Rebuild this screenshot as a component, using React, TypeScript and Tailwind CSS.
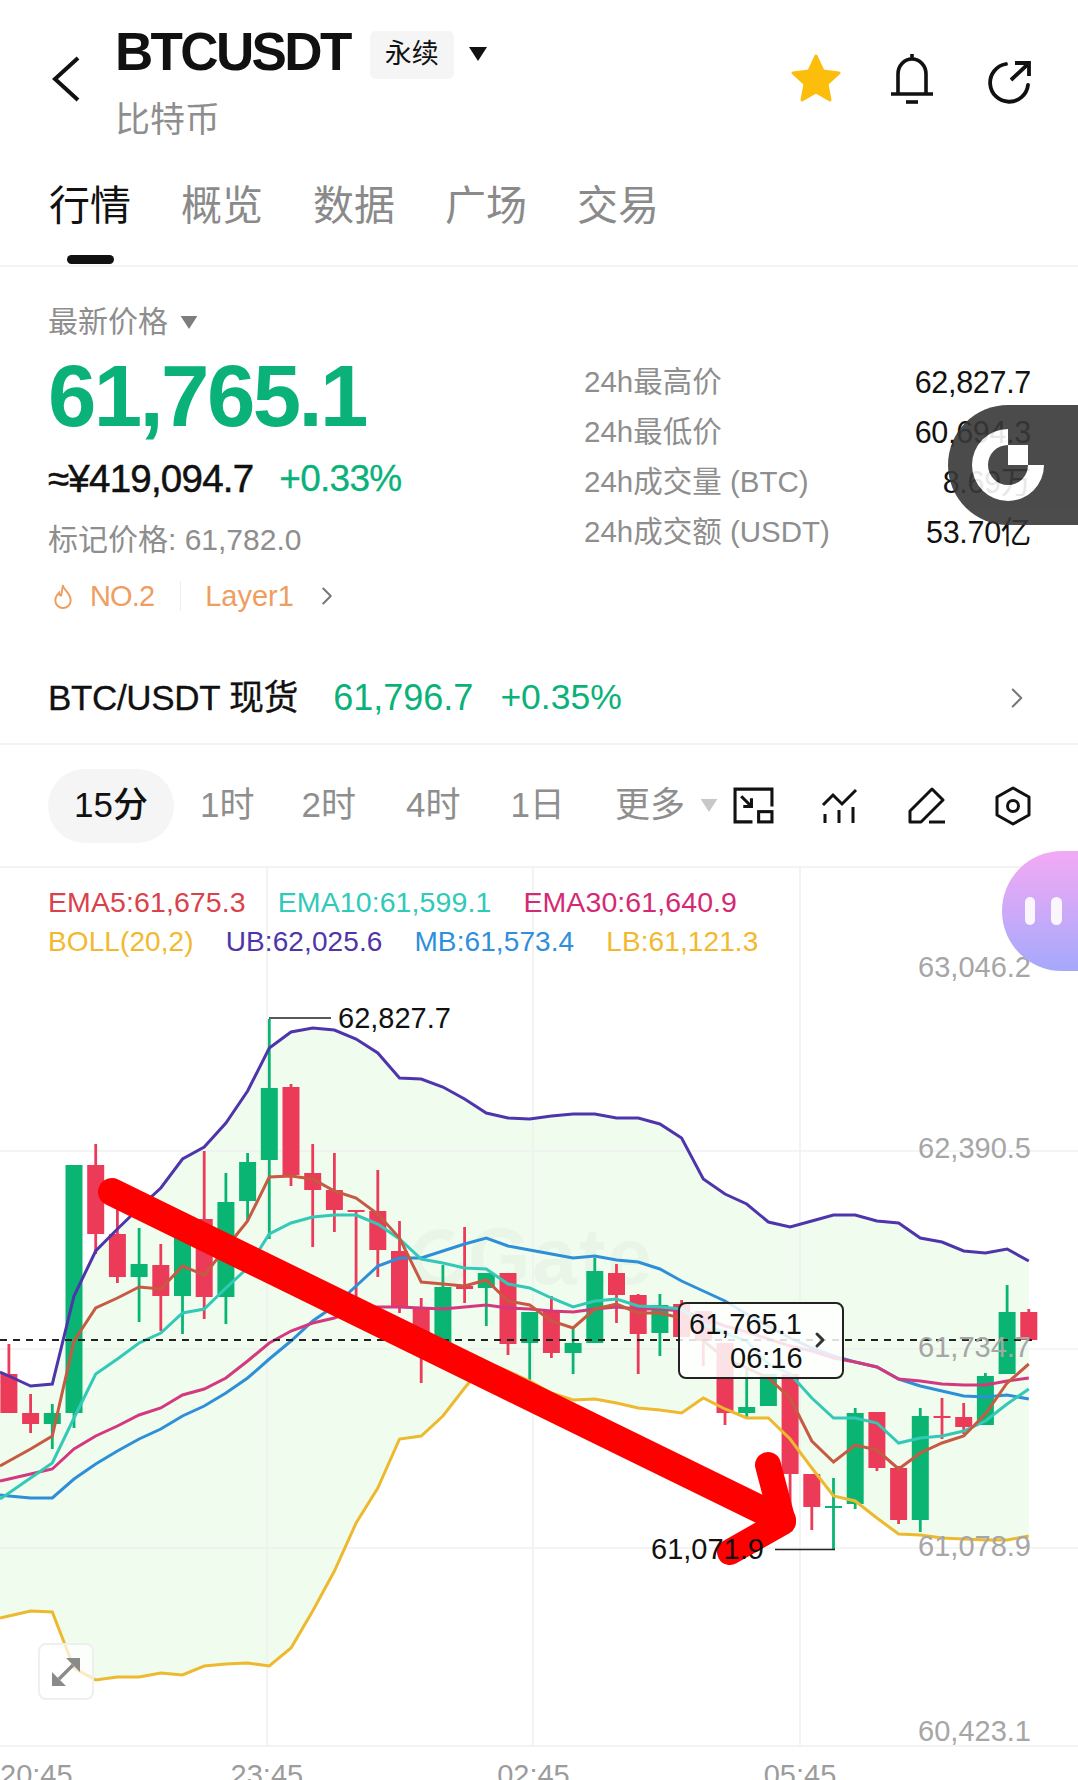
import React from 'react';
import { ChevronRight } from 'lucide-react';

// chart values are in page pixels, x comes from the candle index
const xOf = (i: number) => 74 + 21.7 * i;
const first = -3;

const UB = [1375,1385,1383,1295,1250,1228,1207,1187,1158,1146,1122,1090,1047,1031,1027,1029,1038,1052,1077,1078,1086,1098,1112,1117,1118,1115,1113,1113,1117,1117,1123,1137,1178,1193,1203,1221,1226,1220,1214,1214,1220,1222,1237,1241,1250,1252,1248,1260];
const MB = [1495,1497,1497,1478,1463,1450,1438,1428,1415,1405,1392,1377,1358,1340,1320,1305,1285,1265,1257,1257,1250,1243,1237,1245,1249,1253,1257,1255,1259,1261,1268,1280,1290,1300,1313,1325,1337,1347,1355,1361,1366,1378,1385,1390,1395,1396,1394,1398];
const LB = [1615,1610,1611,1667,1679,1676,1676,1672,1674,1665,1663,1662,1665,1647,1610,1570,1522,1487,1438,1435,1415,1387,1361,1370,1380,1392,1399,1398,1402,1407,1409,1412,1397,1408,1417,1417,1438,1467,1495,1500,1517,1533,1534,1537,1538,1539,1539,1535];
const EMA5 = [1460,1448,1435,1340,1307,1297,1286,1288,1265,1274,1247,1220,1176,1175,1178,1190,1197,1213,1237,1281,1283,1285,1279,1300,1304,1320,1327,1308,1303,1312,1312,1317,1340,1357,1367,1377,1397,1440,1461,1444,1449,1468,1452,1442,1435,1413,1382,1363];
const EMA10 = [1492,1477,1462,1417,1373,1358,1342,1332,1312,1308,1287,1267,1233,1222,1216,1214,1214,1223,1238,1258,1262,1267,1268,1283,1287,1297,1306,1300,1298,1305,1306,1308,1323,1332,1340,1363,1373,1397,1417,1417,1422,1442,1437,1435,1430,1420,1403,1388];
const EMA30 = [1478,1473,1468,1448,1435,1425,1414,1407,1394,1388,1377,1360,1342,1330,1322,1317,1308,1306,1306,1307,1308,1306,1304,1307,1308,1310,1311,1308,1306,1308,1308,1310,1317,1325,1331,1338,1345,1350,1357,1361,1366,1378,1380,1383,1384,1384,1380,1377];

// [index, up, bodyTop, bodyBottom, wickTop, wickBottom]
type Candle = [number, boolean, number, number, number, number];
const candles: Candle[] = [
  [-3,false,1373,1412,1343,1412],[-2,false,1412,1423,1393,1432],[-1,true,1412,1423,1403,1448],
  [0,true,1164,1412,1164,1427],[1,false,1164,1233,1143,1253],[2,false,1233,1276,1207,1282],
  [3,true,1263,1276,1227,1321],[4,false,1264,1295,1243,1330],[5,true,1237,1295,1237,1333],
  [6,false,1218,1296,1150,1318],[7,true,1201,1296,1172,1323],[8,true,1161,1200,1152,1220],
  [9,true,1087,1159,1018,1238],[10,false,1086,1174,1083,1185],[11,false,1172,1189,1143,1246],
  [12,false,1189,1209,1152,1231],[13,false,1209,1211,1209,1298],[14,false,1210,1249,1169,1276],
  [15,false,1250,1307,1220,1312],[16,false,1306,1343,1297,1382],[17,true,1286,1343,1264,1345],
  [18,false,1285,1288,1226,1302],[19,true,1272,1287,1272,1325],[20,false,1272,1343,1272,1354],
  [21,true,1311,1342,1311,1385],[22,false,1310,1352,1295,1357],[23,true,1342,1352,1328,1373],
  [24,true,1270,1342,1257,1342],[25,false,1272,1294,1263,1322],[26,false,1294,1333,1293,1373],
  [27,true,1304,1332,1293,1355],[28,false,1303,1336,1299,1336],[29,false,1310,1340,1310,1365],
  [30,false,1342,1412,1342,1424],[31,true,1406,1412,1367,1417],[32,true,1373,1405,1373,1405],
  [33,false,1373,1473,1373,1503],[34,false,1473,1506,1473,1529],[35,true,1505,1507,1477,1549],
  [36,true,1412,1503,1407,1508],[37,false,1411,1467,1411,1470],[38,false,1467,1519,1465,1523],
  [39,true,1415,1519,1407,1531],[40,false,1415,1417,1397,1438],[41,false,1416,1426,1402,1433],
  [42,true,1375,1424,1372,1424],[43,true,1311,1373,1284,1373],[44,false,1311,1339,1308,1339],
];

// the curves run on to the left edge of the screen
const edgeY = (ys: number[]) => Math.round(ys[0] + (ys[0] - ys[1]) * 0.41);
const points = (ys: number[]) =>
  `0,${edgeY(ys)} ` + ys.map((y, k) => `${xOf(first + k).toFixed(1)},${y}`).join(' ');

const bandPath = () => {
  const top = UB.map((y, k) => `${xOf(first + k).toFixed(1)},${y}`);
  const bottom = LB.map((y, k) => `${xOf(first + k).toFixed(1)},${y}`).reverse();
  return `M0,${edgeY(UB)} L${top.join(' L')} L${bottom.join(' L')} L0,${edgeY(LB)} Z`;
};

function Triangle({ className }: { className: string }) {
  return (
    <svg viewBox="0 0 18 14" className={className}>
      <path d="M0 0H18L9 14Z" fill="currentColor" />
    </svg>
  );
}

function CandleChart() {
  return (
    <svg viewBox="0 867 1078 913" className="absolute inset-0 w-[1078px] h-[913px]">
      <path d={bandPath()} fill="#f0fcee" />
      {[267, 533, 800].map((x) => (
        <line key={x} x1={x} x2={x} y1={867} y2={1746} stroke="#eef1ef" strokeWidth={1.5} />
      ))}
      {[1150, 1348, 1547].map((y) => (
        <line key={y} x1={0} x2={1078} y1={y} y2={y} stroke="#eff1f0" strokeWidth={1.5} />
      ))}
      {/* watermark */}
      <path d="M452 1236A24 24 0 1 0 464 1262" fill="none" stroke="#e9f6e7" strokeWidth={10} />
      <text x={468} y={1283} fontSize={80} fontWeight={700} letterSpacing={2} fill="#e9f6e7">Gate</text>
      {candles.map(([i, up, top, bottom, wickTop, wickBottom]) => {
        const x = xOf(i);
        const color = up ? '#0ab574' : '#ec3a59';
        return (
          <g key={i}>
            <line x1={x} x2={x} y1={wickTop} y2={wickBottom} stroke={color} strokeWidth={2.8} />
            <rect x={x - 8.5} y={top} width={17} height={bottom - top} fill={color} />
          </g>
        );
      })}
      <polyline points={points(LB)} fill="none" stroke="#ecb92f" strokeWidth={3} />
      <polyline points={points(MB)} fill="none" stroke="#2e8fd8" strokeWidth={3} />
      <polyline points={points(EMA30)} fill="none" stroke="#d4387f" strokeWidth={3} />
      <polyline points={points(EMA10)} fill="none" stroke="#33c9b6" strokeWidth={3} />
      <polyline points={points(EMA5)} fill="none" stroke="#c65a42" strokeWidth={3} />
      <polyline points={points(UB)} fill="none" stroke="#4f35ab" strokeWidth={3} />
      <line x1={0} x2={1032} y1={1339} y2={1339} stroke="#222" strokeWidth={2} strokeDasharray="7 6" />
      <path d="M269 1017H331" fill="none" stroke="#222" strokeWidth={1.6} />
      <path d="M775 1548.5H835" fill="none" stroke="#222" strokeWidth={1.6} />
      <path d="M112 1191L782 1519" fill="none" stroke="#ff0000" strokeWidth={28} strokeLinecap="round" />
      <path d="M768 1464L783 1521L730 1551" fill="none" stroke="#ff0000" strokeWidth={26} strokeLinecap="round" strokeLinejoin="round" />
    </svg>
  );
}

export default function App() {
  return (
    <div className="relative w-[1078px] h-[1780px] overflow-hidden bg-white text-[#111] font-['Liberation_Sans','Noto_Sans_CJK_SC',sans-serif]">
      {/* header */}
      <div className="flex justify-between h-[160px]">
        <div className="flex">
          <svg viewBox="0 0 30 48" className="w-[30px] h-[48px] ml-[51px] mt-[55px]">
            <path d="M27 3L4 24L27 45" fill="none" stroke="#111" strokeWidth={4} />
          </svg>
          <div className="ml-[34px] pt-[22px]">
            <div className="flex items-center">
              <span className="text-[53px] leading-[60px] font-bold tracking-[-0.05em]">BTCUSDT</span>
              <span className="ml-[20px] mt-[5px] w-[84px] h-[48px] rounded-md bg-[#f5f5f5] flex items-center justify-center text-[27px]">永续</span>
              <Triangle className="ml-[14px] mt-[3px] w-[20px] h-[14px] text-[#111]" />
            </div>
            <div className="mt-[18px] text-[35px] leading-[40px] text-[#8e8e8e]">比特币</div>
          </div>
        </div>
        <div className="flex items-start pt-[53px] pr-[46px]">
          <svg viewBox="0 0 52 50" className="w-[52px] h-[50px]">
            <path d="M26 3L33 18L49 20L37 31L40 47L26 39L12 47L15 31L3 20L19 18Z" fill="#fdbd0b" stroke="#fdbd0b" strokeWidth={3} strokeLinejoin="round" />
          </svg>
          <svg viewBox="0 0 44 52" className="ml-[48px] w-[44px] h-[52px]">
            <path d="M8 40V21C8 13 14 6 22 6C30 6 36 13 36 21V40" fill="none" stroke="#111" strokeWidth={3.6} />
            <path d="M1 41H43" fill="none" stroke="#111" strokeWidth={3.6} />
            <path d="M16 49H28" fill="none" stroke="#111" strokeWidth={3.6} />
            <path d="M22 1V6" fill="none" stroke="#111" strokeWidth={3.6} />
          </svg>
          <svg viewBox="0 0 46 46" className="ml-[52px] mt-[6px] w-[46px] h-[46px]">
            <path d="M20 5A19 19 0 1 0 42 26" fill="none" stroke="#111" strokeWidth={3.8} strokeLinecap="round" />
            <path d="M25 21L42 5M29 4H43V17" fill="none" stroke="#111" strokeWidth={3.8} />
          </svg>
        </div>
      </div>

      {/* tabs */}
      <div className="h-[107px] border-b-2 border-[#f3f3f3] flex pl-[49px] gap-[50px] pt-[24px] text-[41px] leading-[44px] text-[#8a8a8a]">
        <div className="flex flex-col items-center">
          <span className="text-[#111]">行情</span>
          <span className="mt-[27px] w-[47px] h-[9px] rounded-full bg-[#111]" />
        </div>
        <span>概览</span>
        <span>数据</span>
        <span>广场</span>
        <span>交易</span>
      </div>

      {/* price block */}
      <div className="flex h-[377px]">
        <div className="pl-[48px] w-[584px]">
          <div className="flex items-center pt-[36px] text-[#8e8e8e]">
            <span className="text-[30px] leading-[38px]">最新价格</span>
            <Triangle className="ml-[12px] w-[18px] h-[13px] text-[#7d7d7d]" />
          </div>
          <div className="mt-[10px] text-[87px] leading-[90px] font-bold text-[#0ab27a] tracking-[-0.03em]">61,765.1</div>
          <div className="mt-[18px] flex items-center leading-[40px]">
            <span className="text-[38.5px] tracking-[-0.02em] [-webkit-text-stroke:0.5px_#111]">≈¥419,094.7</span>
            <span className="ml-[26px] text-[37px] tracking-[-0.02em] text-[#0ab27a] [-webkit-text-stroke:0.3px_#0ab27a]">+0.33%</span>
          </div>
          <div className="mt-[23px] text-[30px] leading-[36px] text-[#8e8e8e]">标记价格: 61,782.0</div>
          <div className="mt-[20px] flex items-center text-[29px] leading-[36px] text-[#ee9e5f]">
            <svg viewBox="0 0 22 28" className="w-[22px] h-[27px] ml-[4px]">
              <path d="M11 2C11 7 19 10 19 18C19 23 15 26 11 26C7 26 3 23 3 18C3 14 5 12 7 10C7 12 8 13 9 13C10 10 10 6 11 2Z" fill="none" stroke="currentColor" strokeWidth={2} />
            </svg>
            <span className="ml-[16px] tracking-[-0.03em]">NO.2</span>
            <span className="ml-[26px] w-[1px] h-[30px] bg-[#eeeeee]" />
            <span className="ml-[24px]">Layer1</span>
            <ChevronRight size={30} strokeWidth={1.6} className="ml-[18px] text-[#777]" />
          </div>
        </div>
        <div className="flex-1 pr-[47px] pt-[90px] text-[29.5px] leading-[50px] text-[#8e8e8e]">
          {[
            ['24h最高价', '62,827.7'],
            ['24h最低价', '60,694.3'],
            ['24h成交量 (BTC)', '8.69万'],
            ['24h成交额 (USDT)', '53.70亿'],
          ].map(([label, value]) => (
            <div key={label} className="flex justify-between">
              <span>{label}</span>
              <span className="text-[30.5px] text-[#111] tracking-[-0.01em]">{value}</span>
            </div>
          ))}
        </div>
      </div>

      {/* spot row */}
      <div className="h-[101px] border-b-2 border-[#f3f3f3] flex items-center pl-[48px] pr-[44px] pt-[9px] text-[35px]">
        <span className="tracking-[-0.01em] [-webkit-text-stroke:0.3px_#111]">BTC/USDT 现货</span>
        <span className="ml-[35px] text-[36px] text-[#0ab27a]">61,796.7</span>
        <span className="ml-[27px] text-[35.5px] text-[#0ab27a]">+0.35%</span>
        <ChevronRight size={34} strokeWidth={1.4} className="ml-auto text-[#777]" />
      </div>

      {/* timeframes and tools */}
      <div className="h-[123px] border-b-2 border-[#f3f3f3] flex items-center pl-[48px] text-[35px] text-[#8e8e8e]">
        <span className="w-[126px] h-[74px] rounded-full bg-[#f5f5f5] flex items-center justify-center font-medium text-[#111]">15分</span>
        <span className="ml-[26px]">1时</span>
        <span className="ml-[47px]">2时</span>
        <span className="ml-[50px]">4时</span>
        <span className="ml-[50px]">1日</span>
        <span className="ml-[50px]">更多</span>
        <Triangle className="ml-[15px] w-[18px] h-[13px] text-[#c8c8c8]" />
        <div className="ml-[15px] flex items-center">
          <svg viewBox="0 0 40 36" className="w-[41px] h-[37px]">
            <path d="M19 34H2V2H38V19" fill="none" stroke="#111" strokeWidth={3} />
            <rect x="25" y="24" width="13" height="10" fill="none" stroke="#111" strokeWidth={3} />
            <path d="M8 9L18 19M18 11V19H10" fill="none" stroke="#111" strokeWidth={3} />
          </svg>
          <svg viewBox="0 0 36 36" className="ml-[46px] w-[38px] h-[36px]">
            <path d="M2 17L12 7L21 16L35 2" fill="none" stroke="#111" strokeWidth={3} />
            <path d="M4 26V35M18 22V35M32 19V35" fill="none" stroke="#111" strokeWidth={3} />
          </svg>
          <svg viewBox="0 0 38 38" className="ml-[50px] w-[38px] h-[38px]">
            <path d="M2 24V35H13L35 13L24 2Z" fill="none" stroke="#111" strokeWidth={3} strokeLinejoin="round" />
            <path d="M21 35H37" fill="none" stroke="#111" strokeWidth={3} />
          </svg>
          <svg viewBox="0 0 36 40" className="ml-[49px] w-[36px] h-[40px]">
            <path d="M18 2L34 11V29L18 38L2 29V11Z" fill="none" stroke="#111" strokeWidth={3} strokeLinejoin="round" />
            <circle cx="18" cy="20" r="5.5" fill="none" stroke="#111" strokeWidth={3} />
          </svg>
        </div>
      </div>

      {/* chart */}
      <div className="relative h-[913px]">
        <CandleChart />

        <div className="absolute left-[48px] top-[17px] leading-[34px] tracking-[0.006em]">
          <div className="flex gap-[32px] text-[28.5px]">
            <span className="text-[#d9424b]">EMA5:61,675.3</span>
            <span className="text-[#2fcab8]">EMA10:61,599.1</span>
            <span className="text-[#d42a74]">EMA30:61,640.9</span>
          </div>
          <div className="flex gap-[32px] mt-[6px] text-[28px]">
            <span className="text-[#f2b92e]">BOLL(20,2)</span>
            <span className="text-[#4f36a8]">UB:62,025.6</span>
            <span className="text-[#2f8fdc]">MB:61,573.4</span>
            <span className="text-[#f2b92e]">LB:61,121.3</span>
          </div>
        </div>

        <span className="absolute left-[338px] top-[132px] text-[29px] leading-[36px]">62,827.7</span>
        <span className="absolute left-[651px] top-[663px] text-[29px] leading-[36px]">61,071.9</span>

        {[
          ['63,046.2', 81],
          ['62,390.5', 262],
          ['61,734.7', 461],
          ['61,078.9', 660],
          ['60,423.1', 845],
        ].map(([price, top]) => (
          <span key={price} className="absolute right-[47px] text-[29px] leading-[36px] text-[#a6a6a6]" style={{ top: top as number }}>
            {price}
          </span>
        ))}

        {/* current price tooltip */}
        <div className="absolute left-[678px] top-[434px] w-[166px] h-[77px] rounded-lg border-2 border-[#222] bg-white/85 text-[29px] leading-[38px]">
          <div className="pl-[9px] pt-[1px]">61,765.1</div>
          <div className="pl-[50px] -mt-[4px]">06:16</div>
          <ChevronRight size={24} strokeWidth={3} className="absolute right-[10px] top-[24px] text-[#333]" />
        </div>

        {/* fullscreen button */}
        <div className="absolute left-[38px] top-[775px] w-[56px] h-[57px] rounded-lg border-2 border-[#efefef] bg-white/70 flex items-center justify-center">
          <svg viewBox="0 0 28 28" className="w-[28px] h-[28px]">
            <path d="M0 28V14L14 28ZM28 0V14L14 0Z" fill="#8a8a8a" />
            <path d="M7 21L21 7" fill="none" stroke="#8a8a8a" strokeWidth={3.4} />
          </svg>
        </div>

        {/* time axis */}
        <div className="absolute left-0 top-[877px] w-[1078px] h-[40px] border-t-2 border-[#f3f3f3]">
          <div className="flex text-[29px] leading-[36px] text-[#9c9c9c] pt-[10px]">
            <span>20:45</span>
            <span className="ml-[158px]">23:45</span>
            <span className="ml-[194px]">02:45</span>
            <span className="ml-[194px]">05:45</span>
          </div>
        </div>
      </div>

      {/* floating assistant */}
      <div className="absolute right-0 top-[851px] w-[76px] h-[120px] rounded-l-[60px] bg-linear-to-b from-[#f3a9f4] to-[#a4a8fc] flex items-center gap-[16px] pl-[23px]">
        <span className="w-[10px] h-[28px] rounded-full bg-white/90" />
        <span className="w-[11px] h-[28px] rounded-full bg-white/90" />
      </div>

      {/* floating gate tab */}
      <div className="absolute right-0 top-[405px] w-[130px] h-[120px] rounded-l-[60px] bg-[#383838] opacity-90 flex items-center pl-[24px]">
        <svg viewBox="0 0 72 72" className="w-[72px] h-[72px]">
          <path d="M36 0A36 36 0 1 0 72 36H56A20 20 0 1 1 36 16Z" fill="#fff" />
          <rect x="36" y="16" width="20" height="20" fill="#fff" />
        </svg>
      </div>
    </div>
  );
}
